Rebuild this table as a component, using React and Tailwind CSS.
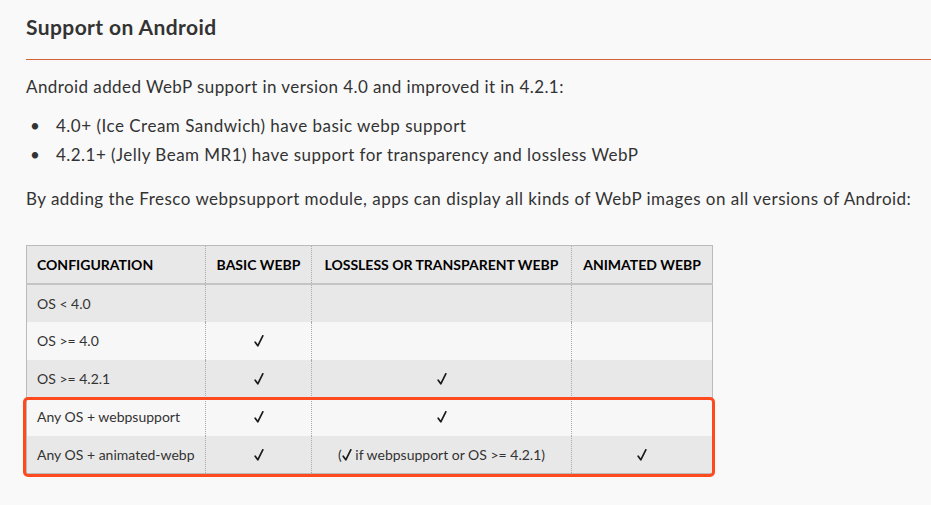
export default function App() {
  const rows = [
    { c: "OS < 4.0", b: "", l: "", a: "" },
    { c: "OS >= 4.0", b: "✓", l: "", a: "" },
    { c: "OS >= 4.2.1", b: "✓", l: "✓", a: "" },
    { c: "Any OS + webpsupport", b: "✓", l: "✓", a: "" },
    { c: "Any OS + animated-webp", b: "✓", l: "cond", a: "✓" },
  ];
  const Check = () => (
    <svg width="10" height="12" viewBox="0 0 10 12" className="inline-block align-[-1px]" aria-label="✓">
      <path d="M1.2 7.2 L3.8 10.8 L8.8 0.8" fill="none" stroke="#1a1a1a" strokeWidth="1.7" strokeLinecap="round" strokeLinejoin="round" />
    </svg>
  );
  const cell = (v) => {
    if (v === "✓") return <Check />;
    if (v === "cond")
      return (
        <span>
          (<Check /> if webpsupport or OS &gt;= 4.2.1)
        </span>
      );
    return v;
  };
  return (
    <div
      className="w-[931px] h-[505px] overflow-hidden bg-[#f9f9f9] pl-[26px] text-[#333]"
      style={{ fontFamily: "Lato, 'Open Sans', sans-serif" }}
    >
      <h2 className="pt-[13px] text-[21px] leading-[28px] font-bold tracking-[0.4px] text-[#333] pb-[18px] border-b border-[#d4633a]">
        Support on Android
      </h2>
      <p className="mt-[13px] text-[17px] leading-[28px] tracking-[0.42px]">
        Android added WebP support in version 4.0 and improved it in 4.2.1:
      </p>
      <ul className="mt-[10px] text-[17px] leading-[29px]">
        <li className="flex items-center">
          <span className="w-[30px] pl-[4px] text-[17px]">•</span>
          <span className="tracking-[0.5px]">4.0+ (Ice Cream Sandwich) have basic webp support</span>
        </li>
        <li className="flex items-center">
          <span className="w-[30px] pl-[4px] text-[17px]">•</span>
          <span className="tracking-[0.46px]">4.2.1+ (Jelly Beam MR1) have support for transparency and lossless WebP</span>
        </li>
      </ul>
      <p className="mt-[16px] text-[17px] leading-[28px] tracking-[0.48px] whitespace-nowrap">
        By adding the Fresco webpsupport module, apps can display all kinds of WebP images on all versions of Android:
      </p>
      <div className="relative mt-[32px] w-[686px]">
        <table className="w-[686px] border-collapse border border-[#bbb] text-[14px] table-fixed">
          <colgroup>
            <col className="w-[179px]" />
            <col className="w-[106px]" />
            <col className="w-[260px]" />
            <col className="w-[141px]" />
          </colgroup>
          <thead>
            <tr className="bg-[#e8e8e8] h-[38px] border-b-2 border-[#c4c4c4]">
              <th className="text-left font-bold text-black px-[10px] border-r border-dotted border-[#aaa]">CONFIGURATION</th>
              <th className="text-center font-bold text-black px-[6px] border-r border-dotted border-[#aaa]">BASIC WEBP</th>
              <th className="text-center font-bold text-black px-[6px] border-r border-dotted border-[#aaa]">LOSSLESS OR TRANSPARENT WEBP</th>
              <th className="text-center font-bold text-black px-[6px]">ANIMATED WEBP</th>
            </tr>
          </thead>
          <tbody>
            {rows.map((r, i) => (
              <tr key={i} className={`h-[38px] ${i % 2 === 0 ? "bg-[#e8e8e8]" : "bg-[#f7f7f7]"}`}>
                <td className="text-left px-[10px] border-r border-dotted border-[#aaa]">{r.c}</td>
                <td className="text-center border-r border-dotted border-[#aaa]">{cell(r.b)}</td>
                <td className="text-center border-r border-dotted border-[#aaa]">{cell(r.l)}</td>
                <td className="text-center">{cell(r.a)}</td>
              </tr>
            ))}
          </tbody>
        </table>
        <div className="absolute left-[-3px] top-[152px] w-[692px] h-[80px] border-[3px] border-[#ff4a1f] rounded-[5px]" />
      </div>
    </div>
  );
}
